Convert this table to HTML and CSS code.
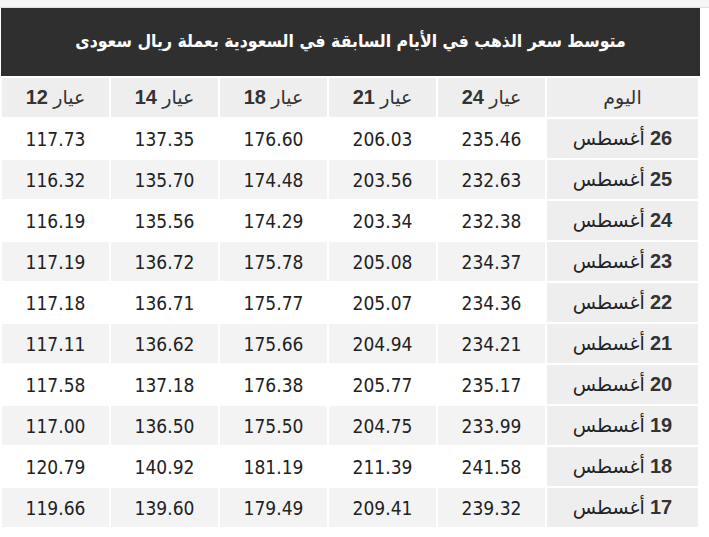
FILE: index.html
```html
<!DOCTYPE html>
<html lang="ar" dir="rtl">
<head>
<meta charset="utf-8">
<link rel="stylesheet" href="styles.css">
</head>
<body>
<div class="topstrip"></div>
<div class="wrap">
  <div class="title">متوسط سعر الذهب في الأيام السابقة في السعودية بعملة ريال سعودى</div>
  <table class="prices">
    <thead>
      <tr>
        <th class="day">اليوم</th>
        <th>عيار <b>24</b></th>
        <th>عيار <b>21</b></th>
        <th>عيار <b>18</b></th>
        <th>عيار <b>14</b></th>
        <th>عيار <b>12</b></th>
      </tr>
    </thead>
    <tbody>
      <tr><td class="day"><b>26</b> أغسطس</td><td>235.46</td><td>206.03</td><td>176.60</td><td>137.35</td><td>117.73</td></tr>
      <tr><td class="day"><b>25</b> أغسطس</td><td>232.63</td><td>203.56</td><td>174.48</td><td>135.70</td><td>116.32</td></tr>
      <tr><td class="day"><b>24</b> أغسطس</td><td>232.38</td><td>203.34</td><td>174.29</td><td>135.56</td><td>116.19</td></tr>
      <tr><td class="day"><b>23</b> أغسطس</td><td>234.37</td><td>205.08</td><td>175.78</td><td>136.72</td><td>117.19</td></tr>
      <tr><td class="day"><b>22</b> أغسطس</td><td>234.36</td><td>205.07</td><td>175.77</td><td>136.71</td><td>117.18</td></tr>
      <tr><td class="day"><b>21</b> أغسطس</td><td>234.21</td><td>204.94</td><td>175.66</td><td>136.62</td><td>117.11</td></tr>
      <tr><td class="day"><b>20</b> أغسطس</td><td>235.17</td><td>205.77</td><td>176.38</td><td>137.18</td><td>117.58</td></tr>
      <tr><td class="day"><b>19</b> أغسطس</td><td>233.99</td><td>204.75</td><td>175.50</td><td>136.50</td><td>117.00</td></tr>
      <tr><td class="day"><b>18</b> أغسطس</td><td>241.58</td><td>211.39</td><td>181.19</td><td>140.92</td><td>120.79</td></tr>
      <tr><td class="day"><b>17</b> أغسطس</td><td>239.32</td><td>209.41</td><td>179.49</td><td>139.60</td><td>119.66</td></tr>
    </tbody>
  </table>
</div>
</body>
</html>
```

FILE: styles.css
```css
html, body {
  margin: 0;
  padding: 0;
  background: #ffffff;
}

.topstrip {
  height: 7px;
  background: #f4f5f7;
  border-bottom: 1px solid #dedfe1;
}

.wrap {
  width: 700px;
  margin-right: auto;
  margin-left: 0;
}

.title {
  margin-left: 1px;
  width: 699px;
  height: 68px;
  background: #2f2f2f;
  color: #ffffff;
  font-family: "DejaVu Sans Condensed", "DejaVu Sans", sans-serif;
  font-stretch: condensed;
  font-weight: bold;
  font-size: 17.5px;
  display: flex;
  align-items: center;
  justify-content: center;
  padding-bottom: 2px;
  box-sizing: border-box;
}

.prices {
  width: 700px;
  border-collapse: separate;
  border-spacing: 2px;
  table-layout: fixed;
}

.prices th,
.prices td {
  height: 39px;
  padding: 0;
  text-align: center;
  vertical-align: middle;
  box-sizing: border-box;
  width: 107px;
}

.prices th.day,
.prices td.day {
  width: 151px;
}

.prices th {
  background: #eeeeee;
  color: #333333;
  font-family: "Liberation Sans", "DejaVu Sans", sans-serif;
  font-size: 19px;
  font-weight: normal;
}

.prices th b {
  font-size: 20px;
  font-weight: bold;
}

.prices td {
  font-family: "DejaVu Sans Condensed", "DejaVu Sans", sans-serif;
  font-stretch: condensed;
  font-size: 19px;
  color: #222222;
  background: #ffffff;
}

.prices tbody tr:nth-child(even) td {
  background: #f3f3f3;
}

.prices td.day,
.prices tbody tr:nth-child(even) td.day {
  background: #eeeeee;
  font-family: "Liberation Sans", "DejaVu Sans", sans-serif;
  font-stretch: normal;
  font-size: 19px;
  color: #222222;
}

.prices td.day b {
  font-size: 20px;
  font-weight: bold;
  color: #333333;
}
```
